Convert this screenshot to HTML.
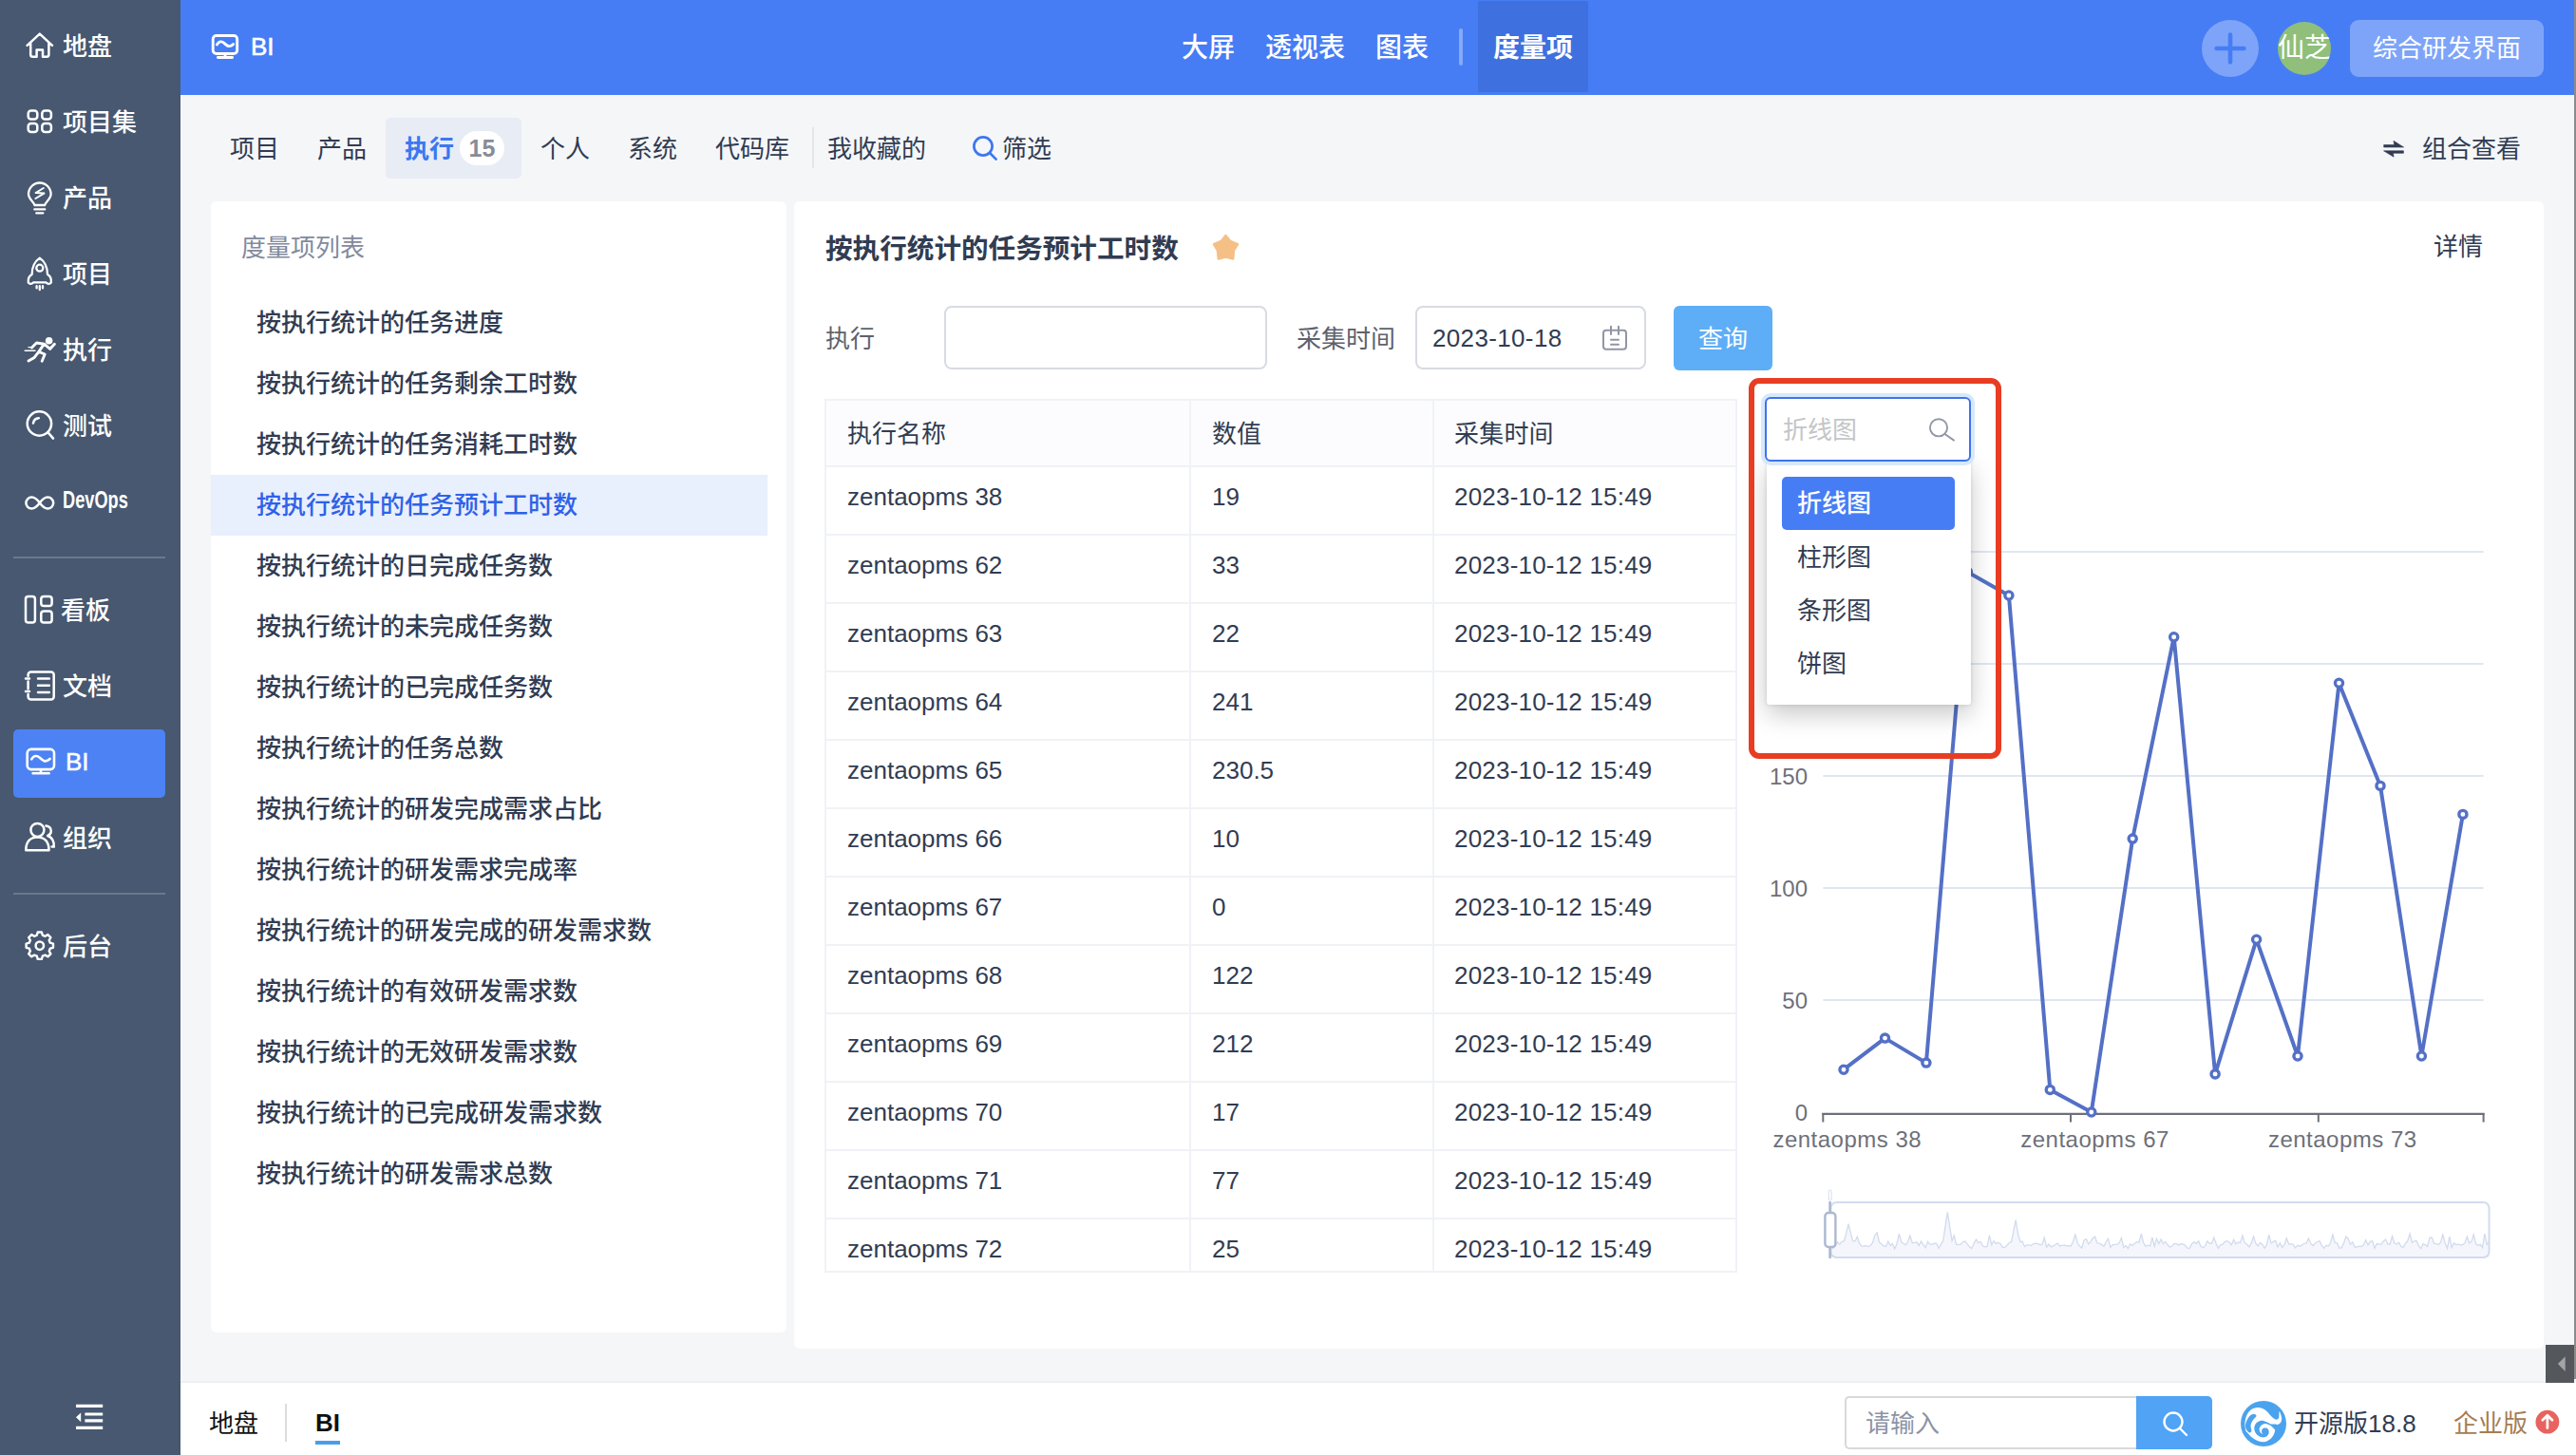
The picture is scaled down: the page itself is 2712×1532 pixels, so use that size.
<!DOCTYPE html>
<html lang="zh-CN">
<head>
<meta charset="utf-8">
<title>BI - 度量项</title>
<style>
*{box-sizing:border-box;margin:0;padding:0}
html,body{width:2712px;height:1532px;overflow:hidden}
body{position:relative;background:#f5f6f8;font-family:"Liberation Sans","Noto Sans CJK SC",sans-serif;font-size:26px;color:#313c52;line-height:1}
.abs{position:absolute}
.t{position:absolute;white-space:nowrap;line-height:40px;height:40px}
/* sidebar */
#side{position:absolute;left:0;top:0;width:190px;height:1532px;background:#475870}
#side .it{position:absolute;left:14px;width:160px;height:72px;border-radius:6px;color:#fff;font-size:26px;font-weight:500}
#side .it span{position:absolute;left:53px;top:14px;line-height:40px;white-space:nowrap}
#side .it svg{position:absolute;left:11px;top:19px;width:32px;height:32px;fill:none;stroke:#fff;stroke-width:2.4;stroke-linecap:round;stroke-linejoin:round}
#side .it.on{background:#4d82f4}
#side .st{position:absolute;left:66px;line-height:40px;height:40px;color:#fff;font-size:26px;font-weight:500;white-space:nowrap}
#side .dv{position:absolute;left:14px;width:160px;height:2px;background:#6a788d}
/* header */
#head{position:absolute;left:190px;top:0;width:2520px;height:100px;background:#467df5}
#head .nv{position:absolute;top:31px;line-height:40px;font-size:28px;color:#fff;white-space:nowrap;font-weight:500}
/* tabs */
.tab{position:absolute;top:137px;line-height:40px;font-size:26px;color:#313c52;white-space:nowrap}
/* panels */
.panel{position:absolute;background:#fff;border-radius:6px}
.li{position:absolute;left:0;width:586px;height:64px;line-height:65px;padding-left:48px;font-weight:500;font-size:26px;color:#313c52;white-space:nowrap}
.li.on{background:#e8effd;color:#2e62e8}
/* table */
#tb{position:absolute;left:868px;top:420px;width:961px;height:920px;overflow:hidden;border:2px solid #f0f2f6}
#tb .r{position:absolute;left:0;width:959px;height:72px;border-bottom:2px solid #f0f2f6}
#tb .r div{position:absolute;top:0;height:72px;line-height:62px;padding-left:22px;border-right:2px solid #f0f2f6;white-space:nowrap;font-size:26px;color:#313c52}
#tb .r .c1{left:0;width:384px}
#tb .r .c2{left:384px;width:256px}
#tb .r .c3{left:640px;width:322px;border-right:none;letter-spacing:.2px;padding-left:21px}
#tb .r.h{background:#fcfcfe;height:70px}
#tb .r.h div{height:70px;line-height:70px}
</style>
</head>
<body>

<div id="side">
  <div class="dv" style="top:586px"></div>
  <div class="dv" style="top:940px"></div>
  <div class="abs" style="left:14px;top:768px;width:160px;height:72px;border-radius:5px;background:#4d82f4"></div>
  <svg class="abs" style="left:0;top:0" width="190" height="1532" viewBox="0 0 190 1532" fill="none" stroke="#fff" stroke-width="2.5" stroke-linecap="round" stroke-linejoin="round">
<!-- home -->
<path d="M28.6 47.8 L41.8 35.6 L55 47.8 M32.2 45 V57.5 Q32.2 59.8 34.5 59.8 H38.6 V52.6 H45 V59.8 H49.1 Q51.4 59.8 51.4 57.5 V45"/>
<!-- program -->
<rect x="29.7" y="116.5" width="9.6" height="9" rx="3"/><rect x="44.3" y="116.5" width="9.6" height="9" rx="3"/><rect x="29.7" y="129.9" width="9.6" height="9" rx="3"/><rect x="44.3" y="129.9" width="9.6" height="9" rx="3"/>
<!-- product bulb -->
<path d="M36.3 216 C36 212.5 30 210 30 204.3 A11.8 11.8 0 0 1 53.6 204.3 C53.6 210 47.6 212.5 47.3 216 Z M36.3 220.4 H47.3 M38.3 224.4 H45.3" stroke-width="2.3"/>
<path d="M45.8 198 L37.6 203 M46.4 203.6 L37.4 209 M37.6 203 L46.4 203.6" stroke-width="2"/>
<!-- project rocket -->
<path d="M41.8 271.6 C36.2 275.5 33.6 281.5 33.6 289 C30.4 290.6 29.4 293.6 29.8 297.6 C31.2 299.4 33.6 299 35 297.4 H48.6 C50 299 52.4 299.4 53.8 297.6 C54.2 293.6 53.2 290.6 50 289 C50 281.5 47.4 275.5 41.8 271.6 Z M38.6 301.2 V303.4 M41.8 301.2 V305.2 M45 301.2 V303.4" stroke-width="2.3"/>
<circle cx="41.8" cy="282.2" r="3.5" stroke-width="2.3"/>
<!-- execution runner -->
<circle cx="51.6" cy="358.8" r="3.8" fill="#fff" stroke="none"/>
<path d="M33.5 366 L38.5 361 L46.5 362.2 L40.8 370.4 L47.2 373 L44.2 380.2 M40.8 370.4 L36.2 376.4 L30 380 M46.5 362.2 L52.6 367.4 L57.4 362.2" stroke-width="2.9"/>
<path d="M26.2 369.3 H37 M30 365.6 H35" stroke-width="1.4"/>
<!-- qa -->
<circle cx="41.4" cy="446" r="12.7"/><path d="M50.6 455.4 L56 461.6 M35 445.6 A6.4 6.4 0 0 1 40.8 440.2"/>
<!-- devops -->
<path d="M41.8 529.6 C38.5 525 36 523.6 33.4 523.6 A6 6 0 0 0 33.4 535.6 C36 535.6 38.5 534.2 41.8 529.6 C45.1 525 47.6 523.6 50.2 523.6 A6 6 0 0 1 50.2 535.6 C47.6 535.6 45.1 534.2 41.8 529.6 Z"/>
<!-- kanban -->
<rect x="27" y="628" width="9.9" height="27.5" rx="2.8"/><rect x="43.3" y="628" width="11.3" height="10" rx="2.8"/><rect x="43.3" y="643.5" width="11.3" height="12" rx="2.8"/>
<!-- doc -->
<path d="M29.6 711.8 V710.4 A3 3 0 0 1 32.6 707.4 H53.7 A3 3 0 0 1 56.7 710.4 V733.5 A3 3 0 0 1 53.7 736.5 H32.6 A3 3 0 0 1 29.6 733.5 V731 M29.6 717.4 V725.2 M27 714.5 H31 M27 728 H31 M40 714.6 H51.8 M40 721.7 H51.8 M40 728.9 H51.8"/>
<!-- org -->
<circle cx="39.4" cy="873.9" r="7"/>
<path d="M27.3 895.2 C27.3 886 32 881.4 39.4 881.4 C46.8 881.4 51.5 886 51.5 895.2 Z M48.4 869.4 C52 870 53.8 872.4 53.8 875 C53.8 877.4 52.4 879.2 50.2 880 C55 881.6 57 885.4 56.8 891.6 H54.6"/>
<!-- admin gear -->
<path d="M38.8 984.7 L39.7 981.5 L43.9 981.5 L44.8 984.7 L47.5 985.8 L50.4 984.1 L53.4 987.1 L51.7 990.0 L52.8 992.7 L56.0 993.6 L56.0 997.8 L52.8 998.7 L51.7 1001.4 L53.4 1004.3 L50.4 1007.3 L47.5 1005.6 L44.8 1006.7 L43.9 1009.9 L39.7 1009.9 L38.8 1006.7 L36.1 1005.6 L33.2 1007.3 L30.2 1004.3 L31.9 1001.4 L30.8 998.7 L27.6 997.8 L27.6 993.6 L30.8 992.7 L31.9 990.0 L30.2 987.1 L33.2 984.1 L36.1 985.8 Z" stroke-width="2.4"/><circle cx="41.8" cy="995.7" r="4.2"/>
<!-- collapse -->
<path d="M80 1480.4 H108.2 M89.4 1489 H108.2 M89.4 1495.9 H108.2 M80 1503.4 H108.2" stroke-width="3.2" stroke-linecap="butt"/><path d="M80 1492.3 L85.2 1487.4 V1497.2 Z" fill="#fff" stroke="none"/>
</svg>
  <svg class="abs" style="left:0;top:0" width="190" height="1532" viewBox="0 0 190 1532" fill="none" stroke="#fff" stroke-width="2.6" stroke-linecap="round" stroke-linejoin="round"><rect x="28.7" y="788.9" width="28.3" height="21.2" rx="4"/><path d="M33.2 799.4 C35.4 795.6 38.6 794.8 41.8 797.8 S47.8 803.4 52.6 799 M34.6 814.2 H51.6 M43 810.4 V814"/></svg>
  <div class="st" style="top:29px">地盘</div>
  <div class="st" style="top:109px">项目集</div>
  <div class="st" style="top:189px">产品</div>
  <div class="st" style="top:269px">项目</div>
  <div class="st" style="top:349px">执行</div>
  <div class="st" style="top:429px">测试</div>
  <div class="st" style="top:506px;font-weight:700;transform:scaleX(.7);transform-origin:0 50%">DevOps</div>
  <div class="st" style="top:623px;left:64px">看板</div>
  <div class="st" style="top:703px">文档</div>
  <div class="st" style="top:782px;left:69px;font-weight:400;-webkit-text-stroke:0.5px #fff">BI</div>
  <div class="st" style="top:863px">组织</div>
  <div class="st" style="top:977px">后台</div>
</div>

<div id="head">
  <svg class="abs" style="left:30px;top:30px" width="40" height="40" viewBox="220 30 40 40" fill="none" stroke="#fff" stroke-width="2.9" stroke-linecap="round" stroke-linejoin="round"><rect x="224.2" y="37.5" width="25.5" height="19" rx="3.6"/><path d="M228.4 47 C230.4 43.6 233.2 42.8 236 45.4 S241.4 50.6 245.6 46.6 M229.4 60.5 H244.6 M237 57 V60"/></svg>
  <div class="nv" style="left:74px;top:29px;font-size:26px;font-weight:400;-webkit-text-stroke:0.6px #fff">BI</div>
  <div class="nv" style="left:1054px">大屏</div>
  <div class="nv" style="left:1142px">透视表</div>
  <div class="nv" style="left:1258px">图表</div>
  <div class="abs" style="left:1346px;top:30px;width:4px;height:39px;background:#86a9f9;border-radius:2px"></div>
  <div class="abs" style="left:1366px;top:1px;width:116px;height:96px;background:#3e70df;border-radius:2px"></div>
  <div class="nv" style="left:1382px;font-weight:700">度量项</div>
  <div class="abs" style="left:2128px;top:21px;width:60px;height:60px;border-radius:30px;background:#7ea4f9"></div>
  <svg class="abs" style="left:2138px;top:31px" width="40" height="40" viewBox="0 0 40 40"><path d="M5.6 20 H34.4 M20 5.6 V34.4" stroke="#467df5" stroke-width="4.6" stroke-linecap="round"/></svg>
  <div class="abs" style="left:2208px;top:23px;width:56px;height:56px;border-radius:28px;background:#8fbf7a;overflow:hidden"><div class="abs" style="left:0;top:8px;width:56px;line-height:40px;font-size:28px;color:#fff;text-align:center;white-space:nowrap">仙芝</div></div>
  <div class="abs" style="left:2284px;top:21px;width:204px;height:60px;border-radius:9px;background:#7ea4f9;color:#fff;font-size:26px;line-height:60px;text-align:center">综合研发界面</div>
</div>
<div class="abs" style="left:2710px;top:0;width:2px;height:1452px;background:#8c8c8c"></div>

<!-- tabs -->
<div class="abs" style="left:406px;top:124px;width:143px;height:64px;border-radius:5px;background:#e8ecf5"></div>
<div class="tab" style="left:242px">项目</div>
<div class="tab" style="left:334px">产品</div>
<div class="tab" style="left:426px;color:#3c77f0;font-weight:700">执行</div>
<div class="abs" style="left:484px;top:138px;width:47px;height:36px;border-radius:18px;background:#fff;color:#888c98;font-weight:700;font-size:25px;line-height:37px;text-align:center">15</div>
<div class="tab" style="left:569px">个人</div>
<div class="tab" style="left:661px">系统</div>
<div class="tab" style="left:753px">代码库</div>
<div class="abs" style="left:855px;top:134px;width:2px;height:43px;background:#e4e6ec"></div>
<div class="tab" style="left:871px">我收藏的</div>
<svg class="abs" style="left:1023px;top:142px" width="28" height="28" viewBox="0 0 28 28" fill="none" stroke="#3c77f0" stroke-width="2.7" stroke-linecap="round"><circle cx="12" cy="12" r="9.6"/><path d="M19 19 L25.6 25.6"/></svg>
<div class="tab" style="left:1055px">筛选</div>
<svg class="abs" style="left:2500px;top:140px" width="40" height="34" viewBox="2500 140 40 34"><path d="M2509.7 152.5 H2520.6 L2520 148.3 L2530.6 155 H2509.7 Z M2530.4 161.3 H2519.5 L2520.1 165.2 L2509.5 158.8 H2530.4 Z" fill="#313c52" stroke="#313c52" stroke-width="0.6" stroke-linejoin="round"/></svg>
<div class="tab" style="left:2550px">组合查看</div>

<!-- left panel -->
<div class="panel" style="left:222px;top:212px;width:606px;height:1191px">
  <div class="t" style="left:32px;top:29px;color:#838a9d">度量项列表</div>
  <div class="li" style="top:96px">按执行统计的任务进度</div>
  <div class="li" style="top:160px">按执行统计的任务剩余工时数</div>
  <div class="li" style="top:224px">按执行统计的任务消耗工时数</div>
  <div class="li on" style="top:288px">按执行统计的任务预计工时数</div>
  <div class="li" style="top:352px">按执行统计的日完成任务数</div>
  <div class="li" style="top:416px">按执行统计的未完成任务数</div>
  <div class="li" style="top:480px">按执行统计的已完成任务数</div>
  <div class="li" style="top:544px">按执行统计的任务总数</div>
  <div class="li" style="top:608px">按执行统计的研发完成需求占比</div>
  <div class="li" style="top:672px">按执行统计的研发需求完成率</div>
  <div class="li" style="top:736px">按执行统计的研发完成的研发需求数</div>
  <div class="li" style="top:800px">按执行统计的有效研发需求数</div>
  <div class="li" style="top:864px">按执行统计的无效研发需求数</div>
  <div class="li" style="top:928px">按执行统计的已完成研发需求数</div>
  <div class="li" style="top:992px">按执行统计的研发需求总数</div>
</div>

<!-- right panel -->
<div class="panel" style="left:836px;top:212px;width:1842px;height:1208px"></div>
<div class="t" style="left:869px;top:242px;font-size:28.6px;font-weight:700">按执行统计的任务预计工时数</div>
<svg class="abs" style="left:1270px;top:240px" width="42" height="40" viewBox="1270 240 42 40"><path d="M1290.4 247.9 L1295.3 253.9 L1303.0 257.2 L1298.9 263.8 L1298.2 272.5 L1290.4 270.5 L1282.7 272.5 L1281.9 263.8 L1277.9 257.2 L1285.6 253.9 Z" fill="#f5c086" stroke="#f5c086" stroke-width="2.4" stroke-linejoin="round"/></svg>
<div class="t" style="left:2562px;top:240px">详情</div>

<div class="t" style="left:869px;top:337px;color:#5e626d">执行</div>
<div class="abs" style="left:994px;top:322px;width:340px;height:67px;border:2px solid #d8dbe3;border-radius:8px;background:#fff"></div>
<div class="t" style="left:1365px;top:337px;color:#5e626d">采集时间</div>
<div class="abs" style="left:1490px;top:322px;width:243px;height:67px;border:2px solid #d8dbe3;border-radius:8px;background:#fff"></div>
<div class="t" style="left:1508px;top:336px;letter-spacing:.35px">2023-10-18</div>
<svg class="abs" style="left:1680px;top:336px" width="40" height="40" viewBox="1680 336 40 40" fill="none" stroke="#9196a4" stroke-width="2" stroke-linecap="round"><rect x="1688" y="347.8" width="24" height="20" rx="3"/><path d="M1696 343.8 V352 M1704 343.8 V352 M1696 357.8 H1704 M1696 362.8 H1704"/></svg>
<div class="abs" style="left:1762px;top:322px;width:104px;height:68px;border-radius:6px;background:#5eaef7;color:#fff;font-size:26px;line-height:70px;text-align:center">查询</div>

<div id="tb">
  <div class="r h" style="top:0"><div class="c1">执行名称</div><div class="c2">数值</div><div class="c3">采集时间</div></div>
  <div class="r" style="top:70px"><div class="c1">zentaopms 38</div><div class="c2">19</div><div class="c3">2023-10-12 15:49</div></div>
  <div class="r" style="top:142px"><div class="c1">zentaopms 62</div><div class="c2">33</div><div class="c3">2023-10-12 15:49</div></div>
  <div class="r" style="top:214px"><div class="c1">zentaopms 63</div><div class="c2">22</div><div class="c3">2023-10-12 15:49</div></div>
  <div class="r" style="top:286px"><div class="c1">zentaopms 64</div><div class="c2">241</div><div class="c3">2023-10-12 15:49</div></div>
  <div class="r" style="top:358px"><div class="c1">zentaopms 65</div><div class="c2">230.5</div><div class="c3">2023-10-12 15:49</div></div>
  <div class="r" style="top:430px"><div class="c1">zentaopms 66</div><div class="c2">10</div><div class="c3">2023-10-12 15:49</div></div>
  <div class="r" style="top:502px"><div class="c1">zentaopms 67</div><div class="c2">0</div><div class="c3">2023-10-12 15:49</div></div>
  <div class="r" style="top:574px"><div class="c1">zentaopms 68</div><div class="c2">122</div><div class="c3">2023-10-12 15:49</div></div>
  <div class="r" style="top:646px"><div class="c1">zentaopms 69</div><div class="c2">212</div><div class="c3">2023-10-12 15:49</div></div>
  <div class="r" style="top:718px"><div class="c1">zentaopms 70</div><div class="c2">17</div><div class="c3">2023-10-12 15:49</div></div>
  <div class="r" style="top:790px"><div class="c1">zentaopms 71</div><div class="c2">77</div><div class="c3">2023-10-12 15:49</div></div>
  <div class="r" style="top:862px"><div class="c1">zentaopms 72</div><div class="c2">25</div><div class="c3">2023-10-12 15:49</div></div>
</div>

<!-- CHART-S -->
<svg class="abs" style="left:0;top:0;pointer-events:none" width="2712" height="1532" viewBox="0 0 2712 1532" font-family="Liberation Sans, sans-serif">
<path d="M1919.3 1053.0 H2614.6" stroke="#e0e6f1" stroke-width="2" fill="none"/>
<path d="M1919.3 935.0 H2614.6" stroke="#e0e6f1" stroke-width="2" fill="none"/>
<path d="M1919.3 817.0 H2614.6" stroke="#e0e6f1" stroke-width="2" fill="none"/>
<path d="M1919.3 699.0 H2614.6" stroke="#e0e6f1" stroke-width="2" fill="none"/>
<path d="M1919.3 581.0 H2614.6" stroke="#e0e6f1" stroke-width="2" fill="none"/>
<path d="M1918.3 1172 H2615.6" stroke="#6e7079" stroke-width="2.2" fill="none" transform="translate(0,0.8)"/>
<path d="M1919.3 1172 V1181.5" stroke="#6e7079" stroke-width="2" fill="none"/>
<path d="M2180.0 1172 V1181.5" stroke="#6e7079" stroke-width="2" fill="none"/>
<path d="M2440.8 1172 V1181.5" stroke="#6e7079" stroke-width="2" fill="none"/>
<path d="M2614.6 1172 V1181.5" stroke="#6e7079" stroke-width="2" fill="none"/>
<text x="1903" y="1180.0" text-anchor="end" font-size="24" fill="#6e7079">0</text>
<text x="1903" y="1062.0" text-anchor="end" font-size="24" fill="#6e7079">50</text>
<text x="1903" y="944.0" text-anchor="end" font-size="24" fill="#6e7079">100</text>
<text x="1903" y="826.0" text-anchor="end" font-size="24" fill="#6e7079">150</text>
<text x="1944.8" y="1208" text-anchor="middle" font-size="24" letter-spacing="0.5" fill="#6e7079">zentaopms 38</text>
<text x="2205.6" y="1208" text-anchor="middle" font-size="24" letter-spacing="0.5" fill="#6e7079">zentaopms 67</text>
<text x="2466.3" y="1208" text-anchor="middle" font-size="24" letter-spacing="0.5" fill="#6e7079">zentaopms 73</text>
<path d="M1941.0 1126.2 L1984.5 1093.1 L2027.9 1119.1 L2071.4 602.2 L2114.9 627.0 L2158.3 1147.4 L2201.8 1171.0 L2245.2 883.1 L2288.7 670.7 L2332.1 1130.9 L2375.6 989.3 L2419.0 1112.0 L2462.5 719.3 L2506.0 827.4 L2549.4 1112.0 L2592.9 857.4" stroke="#5470c6" stroke-width="4" fill="none" stroke-linejoin="bevel"/>
<circle cx="1941.0" cy="1126.2" r="4.1" fill="#fff" stroke="#5470c6" stroke-width="3.3"/>
<circle cx="1984.5" cy="1093.1" r="4.1" fill="#fff" stroke="#5470c6" stroke-width="3.3"/>
<circle cx="2027.9" cy="1119.1" r="4.1" fill="#fff" stroke="#5470c6" stroke-width="3.3"/>
<circle cx="2071.4" cy="602.2" r="4.1" fill="#fff" stroke="#5470c6" stroke-width="3.3"/>
<circle cx="2114.9" cy="627.0" r="4.1" fill="#fff" stroke="#5470c6" stroke-width="3.3"/>
<circle cx="2158.3" cy="1147.4" r="4.1" fill="#fff" stroke="#5470c6" stroke-width="3.3"/>
<circle cx="2201.8" cy="1171.0" r="4.1" fill="#fff" stroke="#5470c6" stroke-width="3.3"/>
<circle cx="2245.2" cy="883.1" r="4.1" fill="#fff" stroke="#5470c6" stroke-width="3.3"/>
<circle cx="2288.7" cy="670.7" r="4.1" fill="#fff" stroke="#5470c6" stroke-width="3.3"/>
<circle cx="2332.1" cy="1130.9" r="4.1" fill="#fff" stroke="#5470c6" stroke-width="3.3"/>
<circle cx="2375.6" cy="989.3" r="4.1" fill="#fff" stroke="#5470c6" stroke-width="3.3"/>
<circle cx="2419.0" cy="1112.0" r="4.1" fill="#fff" stroke="#5470c6" stroke-width="3.3"/>
<circle cx="2462.5" cy="719.3" r="4.1" fill="#fff" stroke="#5470c6" stroke-width="3.3"/>
<circle cx="2506.0" cy="827.4" r="4.1" fill="#fff" stroke="#5470c6" stroke-width="3.3"/>
<circle cx="2549.4" cy="1112.0" r="4.1" fill="#fff" stroke="#5470c6" stroke-width="3.3"/>
<circle cx="2592.9" cy="857.4" r="4.1" fill="#fff" stroke="#5470c6" stroke-width="3.3"/>
<path d="M1927.5 1311.7 L1929.8 1314.5 L1932.1 1312.0 L1934.5 1307.6 L1936.8 1310.3 L1939.1 1307.1 L1941.4 1307.0 L1943.7 1298.4 L1946.0 1288.7 L1948.4 1298.4 L1950.7 1306.6 L1953.0 1306.9 L1955.3 1302.2 L1957.6 1309.1 L1959.9 1312.1 L1962.3 1312.0 L1964.6 1311.7 L1966.9 1312.5 L1969.2 1311.5 L1971.5 1308.4 L1973.9 1300.6 L1976.2 1298.0 L1978.5 1308.0 L1980.8 1309.8 L1983.1 1312.0 L1985.4 1312.4 L1987.8 1306.9 L1990.1 1311.2 L1992.4 1309.5 L1994.7 1314.8 L1997.0 1309.7 L1999.3 1299.3 L2001.7 1307.6 L2004.0 1309.2 L2006.3 1310.9 L2008.6 1307.3 L2010.9 1301.0 L2013.3 1308.7 L2015.6 1308.3 L2017.9 1307.8 L2020.2 1311.6 L2022.5 1307.1 L2024.8 1310.3 L2027.2 1313.6 L2029.5 1307.2 L2031.8 1310.0 L2034.1 1310.1 L2036.4 1309.2 L2038.8 1309.4 L2041.1 1314.2 L2043.4 1309.9 L2045.7 1306.5 L2048.0 1291.4 L2050.3 1276.3 L2052.7 1291.4 L2055.0 1306.5 L2057.3 1300.8 L2059.6 1310.4 L2061.9 1310.5 L2064.2 1310.1 L2066.6 1307.6 L2068.9 1306.9 L2071.2 1309.9 L2073.5 1312.7 L2075.8 1314.5 L2078.2 1309.1 L2080.5 1305.1 L2082.8 1308.7 L2085.1 1307.3 L2087.4 1311.8 L2089.7 1312.9 L2092.1 1312.5 L2094.4 1300.7 L2096.7 1310.7 L2099.0 1306.6 L2101.3 1309.4 L2103.6 1308.4 L2106.0 1309.5 L2108.3 1313.4 L2110.6 1313.4 L2112.9 1311.3 L2115.2 1308.6 L2117.6 1307.5 L2119.9 1296.0 L2122.2 1284.5 L2124.5 1299.0 L2126.8 1307.5 L2129.1 1307.0 L2131.5 1312.5 L2133.8 1310.9 L2136.1 1310.9 L2138.4 1311.6 L2140.7 1309.5 L2143.0 1309.2 L2145.4 1309.4 L2147.7 1310.7 L2150.0 1310.2 L2152.3 1303.2 L2154.6 1313.1 L2157.0 1310.0 L2159.3 1313.0 L2161.6 1311.9 L2163.9 1310.5 L2166.2 1309.1 L2168.5 1312.0 L2170.9 1311.3 L2173.2 1310.9 L2175.5 1312.0 L2177.8 1311.6 L2180.1 1312.2 L2182.4 1307.5 L2184.8 1300.0 L2187.1 1308.5 L2189.4 1312.0 L2191.7 1314.0 L2194.0 1306.0 L2196.4 1304.5 L2198.7 1309.9 L2201.0 1307.4 L2203.3 1303.8 L2205.6 1302.0 L2207.9 1308.9 L2210.3 1309.2 L2212.6 1310.4 L2214.9 1312.3 L2217.2 1307.7 L2219.5 1304.2 L2221.9 1313.3 L2224.2 1310.6 L2226.5 1310.7 L2228.8 1310.2 L2231.1 1308.9 L2233.4 1303.3 L2235.8 1313.3 L2238.1 1311.7 L2240.4 1314.5 L2242.7 1309.9 L2245.0 1311.3 L2247.3 1309.3 L2249.7 1307.7 L2252.0 1308.2 L2254.3 1299.0 L2256.6 1308.2 L2258.9 1312.4 L2261.3 1311.2 L2263.6 1312.0 L2265.9 1302.9 L2268.2 1312.3 L2270.5 1304.1 L2272.8 1309.4 L2275.2 1305.0 L2277.5 1309.6 L2279.8 1307.4 L2282.1 1310.8 L2284.4 1313.1 L2286.7 1312.0 L2289.1 1309.5 L2291.4 1309.7 L2293.7 1310.9 L2296.0 1309.6 L2298.3 1309.9 L2300.7 1311.3 L2303.0 1314.4 L2305.3 1314.1 L2307.6 1309.6 L2309.9 1307.7 L2312.2 1309.5 L2314.6 1306.7 L2316.9 1312.1 L2319.2 1313.8 L2321.5 1311.9 L2323.8 1306.9 L2326.1 1309.0 L2328.5 1309.2 L2330.8 1303.0 L2333.1 1309.2 L2335.4 1314.4 L2337.7 1310.9 L2340.1 1310.2 L2342.4 1307.3 L2344.7 1306.6 L2347.0 1307.9 L2349.3 1310.9 L2351.6 1305.3 L2354.0 1309.7 L2356.3 1308.0 L2358.6 1308.7 L2360.9 1301.0 L2363.2 1308.7 L2365.6 1310.2 L2367.9 1312.8 L2370.2 1308.9 L2372.5 1302.0 L2374.8 1308.9 L2377.1 1311.9 L2379.5 1308.4 L2381.8 1310.3 L2384.1 1314.3 L2386.4 1310.4 L2388.7 1300.1 L2391.0 1309.0 L2393.4 1307.3 L2395.7 1306.4 L2398.0 1313.1 L2400.3 1308.8 L2402.6 1313.5 L2405.0 1310.6 L2407.3 1303.7 L2409.6 1309.8 L2411.9 1309.9 L2414.2 1310.1 L2416.5 1314.0 L2418.9 1311.2 L2421.2 1312.2 L2423.5 1311.1 L2425.8 1309.3 L2428.1 1309.1 L2430.4 1304.0 L2432.8 1309.4 L2435.1 1311.7 L2437.4 1308.9 L2439.7 1307.5 L2442.0 1306.6 L2444.4 1311.3 L2446.7 1314.2 L2449.0 1311.4 L2451.3 1312.0 L2453.6 1308.5 L2455.9 1300.0 L2458.3 1308.5 L2460.6 1308.9 L2462.9 1314.3 L2465.2 1313.6 L2467.5 1308.9 L2469.8 1302.0 L2472.2 1304.2 L2474.5 1310.3 L2476.8 1307.9 L2479.1 1313.0 L2481.4 1313.0 L2483.8 1312.2 L2486.1 1312.5 L2488.4 1310.7 L2490.7 1305.7 L2493.0 1310.9 L2495.3 1307.2 L2497.7 1306.7 L2500.0 1314.4 L2502.3 1309.5 L2504.6 1309.9 L2506.9 1310.3 L2509.2 1307.0 L2511.6 1305.0 L2513.9 1310.0 L2516.2 1310.0 L2518.5 1301.5 L2520.8 1309.0 L2523.2 1310.1 L2525.5 1308.2 L2527.8 1312.4 L2530.1 1313.3 L2532.4 1309.1 L2534.7 1306.8 L2537.1 1299.0 L2539.4 1308.2 L2541.7 1306.8 L2544.0 1306.2 L2546.3 1311.6 L2548.7 1314.8 L2551.0 1309.6 L2553.3 1310.8 L2555.6 1312.4 L2557.9 1303.4 L2560.2 1303.0 L2562.6 1309.2 L2564.9 1309.7 L2567.2 1310.5 L2569.5 1308.1 L2571.8 1300.0 L2574.1 1308.5 L2576.5 1314.7 L2578.8 1302.1 L2581.1 1313.7 L2583.4 1308.7 L2585.7 1310.6 L2588.1 1310.1 L2590.4 1311.0 L2592.7 1310.5 L2595.0 1308.9 L2597.3 1302.0 L2599.6 1308.9 L2602.0 1307.1 L2604.3 1299.9 L2606.6 1309.8 L2608.9 1311.2 L2611.2 1310.3 L2613.5 1313.5 L2615.9 1299.1 L2618.2 1310.2 L2620.5 1307.8 L2620.5 1324 L1927.5 1324 Z" fill="#f5f6fb" stroke="none"/>
<path d="M1927.5 1311.7 L1929.8 1314.5 L1932.1 1312.0 L1934.5 1307.6 L1936.8 1310.3 L1939.1 1307.1 L1941.4 1307.0 L1943.7 1298.4 L1946.0 1288.7 L1948.4 1298.4 L1950.7 1306.6 L1953.0 1306.9 L1955.3 1302.2 L1957.6 1309.1 L1959.9 1312.1 L1962.3 1312.0 L1964.6 1311.7 L1966.9 1312.5 L1969.2 1311.5 L1971.5 1308.4 L1973.9 1300.6 L1976.2 1298.0 L1978.5 1308.0 L1980.8 1309.8 L1983.1 1312.0 L1985.4 1312.4 L1987.8 1306.9 L1990.1 1311.2 L1992.4 1309.5 L1994.7 1314.8 L1997.0 1309.7 L1999.3 1299.3 L2001.7 1307.6 L2004.0 1309.2 L2006.3 1310.9 L2008.6 1307.3 L2010.9 1301.0 L2013.3 1308.7 L2015.6 1308.3 L2017.9 1307.8 L2020.2 1311.6 L2022.5 1307.1 L2024.8 1310.3 L2027.2 1313.6 L2029.5 1307.2 L2031.8 1310.0 L2034.1 1310.1 L2036.4 1309.2 L2038.8 1309.4 L2041.1 1314.2 L2043.4 1309.9 L2045.7 1306.5 L2048.0 1291.4 L2050.3 1276.3 L2052.7 1291.4 L2055.0 1306.5 L2057.3 1300.8 L2059.6 1310.4 L2061.9 1310.5 L2064.2 1310.1 L2066.6 1307.6 L2068.9 1306.9 L2071.2 1309.9 L2073.5 1312.7 L2075.8 1314.5 L2078.2 1309.1 L2080.5 1305.1 L2082.8 1308.7 L2085.1 1307.3 L2087.4 1311.8 L2089.7 1312.9 L2092.1 1312.5 L2094.4 1300.7 L2096.7 1310.7 L2099.0 1306.6 L2101.3 1309.4 L2103.6 1308.4 L2106.0 1309.5 L2108.3 1313.4 L2110.6 1313.4 L2112.9 1311.3 L2115.2 1308.6 L2117.6 1307.5 L2119.9 1296.0 L2122.2 1284.5 L2124.5 1299.0 L2126.8 1307.5 L2129.1 1307.0 L2131.5 1312.5 L2133.8 1310.9 L2136.1 1310.9 L2138.4 1311.6 L2140.7 1309.5 L2143.0 1309.2 L2145.4 1309.4 L2147.7 1310.7 L2150.0 1310.2 L2152.3 1303.2 L2154.6 1313.1 L2157.0 1310.0 L2159.3 1313.0 L2161.6 1311.9 L2163.9 1310.5 L2166.2 1309.1 L2168.5 1312.0 L2170.9 1311.3 L2173.2 1310.9 L2175.5 1312.0 L2177.8 1311.6 L2180.1 1312.2 L2182.4 1307.5 L2184.8 1300.0 L2187.1 1308.5 L2189.4 1312.0 L2191.7 1314.0 L2194.0 1306.0 L2196.4 1304.5 L2198.7 1309.9 L2201.0 1307.4 L2203.3 1303.8 L2205.6 1302.0 L2207.9 1308.9 L2210.3 1309.2 L2212.6 1310.4 L2214.9 1312.3 L2217.2 1307.7 L2219.5 1304.2 L2221.9 1313.3 L2224.2 1310.6 L2226.5 1310.7 L2228.8 1310.2 L2231.1 1308.9 L2233.4 1303.3 L2235.8 1313.3 L2238.1 1311.7 L2240.4 1314.5 L2242.7 1309.9 L2245.0 1311.3 L2247.3 1309.3 L2249.7 1307.7 L2252.0 1308.2 L2254.3 1299.0 L2256.6 1308.2 L2258.9 1312.4 L2261.3 1311.2 L2263.6 1312.0 L2265.9 1302.9 L2268.2 1312.3 L2270.5 1304.1 L2272.8 1309.4 L2275.2 1305.0 L2277.5 1309.6 L2279.8 1307.4 L2282.1 1310.8 L2284.4 1313.1 L2286.7 1312.0 L2289.1 1309.5 L2291.4 1309.7 L2293.7 1310.9 L2296.0 1309.6 L2298.3 1309.9 L2300.7 1311.3 L2303.0 1314.4 L2305.3 1314.1 L2307.6 1309.6 L2309.9 1307.7 L2312.2 1309.5 L2314.6 1306.7 L2316.9 1312.1 L2319.2 1313.8 L2321.5 1311.9 L2323.8 1306.9 L2326.1 1309.0 L2328.5 1309.2 L2330.8 1303.0 L2333.1 1309.2 L2335.4 1314.4 L2337.7 1310.9 L2340.1 1310.2 L2342.4 1307.3 L2344.7 1306.6 L2347.0 1307.9 L2349.3 1310.9 L2351.6 1305.3 L2354.0 1309.7 L2356.3 1308.0 L2358.6 1308.7 L2360.9 1301.0 L2363.2 1308.7 L2365.6 1310.2 L2367.9 1312.8 L2370.2 1308.9 L2372.5 1302.0 L2374.8 1308.9 L2377.1 1311.9 L2379.5 1308.4 L2381.8 1310.3 L2384.1 1314.3 L2386.4 1310.4 L2388.7 1300.1 L2391.0 1309.0 L2393.4 1307.3 L2395.7 1306.4 L2398.0 1313.1 L2400.3 1308.8 L2402.6 1313.5 L2405.0 1310.6 L2407.3 1303.7 L2409.6 1309.8 L2411.9 1309.9 L2414.2 1310.1 L2416.5 1314.0 L2418.9 1311.2 L2421.2 1312.2 L2423.5 1311.1 L2425.8 1309.3 L2428.1 1309.1 L2430.4 1304.0 L2432.8 1309.4 L2435.1 1311.7 L2437.4 1308.9 L2439.7 1307.5 L2442.0 1306.6 L2444.4 1311.3 L2446.7 1314.2 L2449.0 1311.4 L2451.3 1312.0 L2453.6 1308.5 L2455.9 1300.0 L2458.3 1308.5 L2460.6 1308.9 L2462.9 1314.3 L2465.2 1313.6 L2467.5 1308.9 L2469.8 1302.0 L2472.2 1304.2 L2474.5 1310.3 L2476.8 1307.9 L2479.1 1313.0 L2481.4 1313.0 L2483.8 1312.2 L2486.1 1312.5 L2488.4 1310.7 L2490.7 1305.7 L2493.0 1310.9 L2495.3 1307.2 L2497.7 1306.7 L2500.0 1314.4 L2502.3 1309.5 L2504.6 1309.9 L2506.9 1310.3 L2509.2 1307.0 L2511.6 1305.0 L2513.9 1310.0 L2516.2 1310.0 L2518.5 1301.5 L2520.8 1309.0 L2523.2 1310.1 L2525.5 1308.2 L2527.8 1312.4 L2530.1 1313.3 L2532.4 1309.1 L2534.7 1306.8 L2537.1 1299.0 L2539.4 1308.2 L2541.7 1306.8 L2544.0 1306.2 L2546.3 1311.6 L2548.7 1314.8 L2551.0 1309.6 L2553.3 1310.8 L2555.6 1312.4 L2557.9 1303.4 L2560.2 1303.0 L2562.6 1309.2 L2564.9 1309.7 L2567.2 1310.5 L2569.5 1308.1 L2571.8 1300.0 L2574.1 1308.5 L2576.5 1314.7 L2578.8 1302.1 L2581.1 1313.7 L2583.4 1308.7 L2585.7 1310.6 L2588.1 1310.1 L2590.4 1311.0 L2592.7 1310.5 L2595.0 1308.9 L2597.3 1302.0 L2599.6 1308.9 L2602.0 1307.1 L2604.3 1299.9 L2606.6 1309.8 L2608.9 1311.2 L2611.2 1310.3 L2613.5 1313.5 L2615.9 1299.1 L2618.2 1310.2 L2620.5 1307.8" fill="none" stroke="#d2dbee" stroke-width="1.3"/>
<rect x="1927.5" y="1266" width="693.0" height="58" rx="6" fill="none" stroke="#d2dbee" stroke-width="2"/>
<path d="M1926.6 1265 V1325" stroke="#acb8d1" stroke-width="2.6" fill="none"/>
<rect x="1921.4" y="1277" width="11" height="36" rx="3.5" fill="#fff" stroke="#acb8d1" stroke-width="2.4"/>
<rect x="1925.2" y="1253" width="3" height="11" rx="1.5" fill="#fff" stroke="#dde3f0" stroke-width="1.2"/>
</svg>
<!-- CHART-E -->
<!-- PICKER-S -->
<div class="abs" style="left:1860px;top:484px;width:215px;height:258px;background:#fff;border-radius:0 0 3px 3px;box-shadow:0 10px 26px rgba(0,0,0,.22),0 0 4px rgba(0,0,0,.12)"></div>
<div class="abs" style="left:1858px;top:418px;width:217px;height:68px;border:2px solid #3f72f0;border-radius:6px;background:#fff;box-shadow:0 0 0 4px #d6e9fb"></div>
<div class="t" style="left:1877px;top:433px;color:#c4c5c8">折线图</div>
<svg class="abs" style="left:2025px;top:434px" width="40" height="36" viewBox="2025 434 40 36" fill="none" stroke="#9197a6" stroke-width="1.9" stroke-linecap="round"><circle cx="2041" cy="450.3" r="9.1"/><path d="M2047.6 457 L2057 463.6"/></svg>
<div class="abs" style="left:1876px;top:502px;width:182px;height:56px;border-radius:5px;background:#467df5"></div>
<div class="t" style="left:1892px;top:510px;color:#fff;font-weight:500">折线图</div>
<div class="t" style="left:1892px;top:567px">柱形图</div>
<div class="t" style="left:1892px;top:623px">条形图</div>
<div class="t" style="left:1892px;top:679px">饼图</div>
<div class="abs" style="left:1840.5px;top:398px;width:266.5px;height:401px;border:6.2px solid #e83d22;border-radius:11px"></div>
<!-- PICKER-E -->
<!-- FOOTER-S -->
<div class="abs" style="left:190px;top:1456px;width:2522px;height:76px;background:#fff;box-shadow:0 -1px 2px rgba(40,60,100,.08)"></div>
<div class="abs" style="left:2680px;top:1416px;width:30px;height:40px;background:#54575c"></div>
<svg class="abs" style="left:2690px;top:1426px" width="14" height="20" viewBox="2690 1426 14 20"><path d="M2700.7 1428.2 L2692.9 1436 L2700.7 1444 Z" fill="#a3a4a6"/></svg>
<div class="t" style="left:220px;top:1479px;color:#111">地盘</div>
<div class="abs" style="left:300px;top:1478px;width:2px;height:40px;background:#dcdcdc"></div>
<div class="t" style="left:332px;top:1478px;color:#111;font-weight:700">BI</div>
<div class="abs" style="left:332px;top:1517px;width:26px;height:4px;background:#4a9dea"></div>
<div class="abs" style="left:1942px;top:1470px;width:310px;height:56px;border:2px solid #d9d9d9;border-right:none;border-radius:5px 0 0 5px;background:#fff"></div>
<div class="t" style="left:1964px;top:1479px;color:#8d93a5">请输入</div>
<div class="abs" style="left:2249px;top:1470px;width:80px;height:56px;border-radius:0 5px 5px 0;background:#50a3f5"></div>
<svg class="abs" style="left:2276px;top:1485px" width="28" height="28" viewBox="0 0 28 28" fill="none" stroke="#fff" stroke-width="2.4" stroke-linecap="round"><circle cx="12" cy="12" r="9.5"/><path d="M19 19 L26 26"/></svg>
<svg class="abs" style="left:2359px;top:1474.7px" width="48" height="48" viewBox="0 0 48 48"><circle cx="24" cy="24" r="24" fill="#4ba3ee"/><path d="M40.60 11.00 C40.98 10.75 42.17 14.08 42.60 15.50 C43.03 16.92 43.30 18.25 43.20 19.50 C43.10 20.75 42.70 22.08 42.00 23.00 C41.30 23.92 39.90 24.42 39.00 25.00 C38.10 25.58 37.05 25.67 36.60 26.50 C36.15 27.33 36.53 28.67 36.30 30.00 C36.07 31.33 35.92 32.92 35.20 34.50 C34.48 36.08 33.53 38.08 32.00 39.50 C30.47 40.92 28.17 42.48 26.00 43.00 C23.83 43.52 21.33 43.33 19.00 42.60 C16.67 41.87 13.92 40.03 12.00 38.60 C10.08 37.17 8.60 35.20 7.50 34.00 C6.40 32.80 5.88 32.57 5.40 31.40 C4.92 30.23 4.75 28.48 4.60 27.00 C4.45 25.52 4.27 24.33 4.50 22.50 C4.73 20.67 5.25 17.92 6.00 16.00 C6.75 14.08 7.67 12.37 9.00 11.00 C10.33 9.63 12.33 8.45 14.00 7.80 C15.67 7.15 17.33 7.00 19.00 7.10 C20.67 7.20 22.50 7.67 24.00 8.40 C25.50 9.13 26.67 10.23 28.00 11.50 C29.33 12.77 30.75 14.75 32.00 16.00 C33.25 17.25 34.42 18.40 35.50 19.00 C36.58 19.60 37.70 19.93 38.50 19.60 C39.30 19.27 39.95 18.43 40.30 17.00 C40.65 15.57 40.22 11.25 40.60 11.00 Z" fill="#fff"/><path d="M38.00 25.00 C37.00 23.82 33.67 24.82 32.00 24.40 C30.33 23.98 29.33 23.08 28.00 22.50 C26.67 21.92 25.25 21.15 24.00 20.90 C22.75 20.65 21.67 20.68 20.50 21.00 C19.33 21.32 17.95 21.97 17.00 22.80 C16.05 23.63 15.25 24.80 14.80 26.00 C14.35 27.20 14.13 28.67 14.30 30.00 C14.47 31.33 15.02 32.83 15.80 34.00 C16.58 35.17 17.72 36.27 19.00 37.00 C20.28 37.73 22.08 38.37 23.50 38.40 C24.92 38.43 26.48 37.93 27.50 37.20 C28.52 36.47 29.32 35.12 29.60 34.00 C29.88 32.88 29.63 31.40 29.20 30.50 C28.77 29.60 27.78 28.92 27.00 28.60 C26.22 28.28 25.23 28.37 24.50 28.60 C23.77 28.83 23.02 29.35 22.60 30.00 C22.18 30.65 21.93 31.67 22.00 32.50 C22.07 33.33 23.23 34.92 23.00 35.00 C22.77 35.08 21.17 33.92 20.60 33.00 C20.03 32.08 19.53 30.58 19.60 29.50 C19.67 28.42 20.27 27.33 21.00 26.50 C21.73 25.67 22.92 24.88 24.00 24.50 C25.08 24.12 26.33 23.98 27.50 24.20 C28.67 24.42 29.92 25.13 31.00 25.80 C32.08 26.47 32.83 27.25 34.00 28.20 C35.17 29.15 37.33 32.03 38.00 31.50 C38.67 30.97 39.00 26.18 38.00 25.00 Z" fill="#4ba3ee"/><path d="M13.10 13.90 C13.95 13.80 15.05 14.00 15.60 14.40 C16.15 14.80 16.82 15.37 16.40 16.30 C15.98 17.23 14.02 18.72 13.10 20.00 C12.18 21.28 11.32 22.75 10.90 24.00 C10.48 25.25 10.52 26.27 10.60 27.50 C10.68 28.73 11.48 30.45 11.40 31.40 C11.32 32.35 10.63 32.95 10.10 33.20 C9.57 33.45 8.95 33.52 8.20 32.90 C7.45 32.28 6.10 30.98 5.60 29.50 C5.10 28.02 4.77 25.98 5.20 24.00 C5.63 22.02 7.32 19.10 8.20 17.60 C9.08 16.10 9.68 15.62 10.50 15.00 C11.32 14.38 12.25 14.00 13.10 13.90 Z" fill="#4ba3ee"/></svg>
<div class="t" style="left:2415px;top:1479px">开源版18.8</div>
<div class="t" style="left:2583px;top:1479px;color:#a67c52">企业版</div>
<svg class="abs" style="left:2668px;top:1483px" width="28" height="28" viewBox="2668 1483 28 28"><circle cx="2681.9" cy="1497.2" r="12.4" fill="#e8635f"/><path d="M2681.9 1503.6 V1490.6 M2676.8 1495.3 L2681.9 1490.2 L2687 1495.3" fill="none" stroke="#fff" stroke-width="2.7" stroke-linecap="round" stroke-linejoin="round"/></svg>
<!-- FOOTER-E -->

</body>
</html>
